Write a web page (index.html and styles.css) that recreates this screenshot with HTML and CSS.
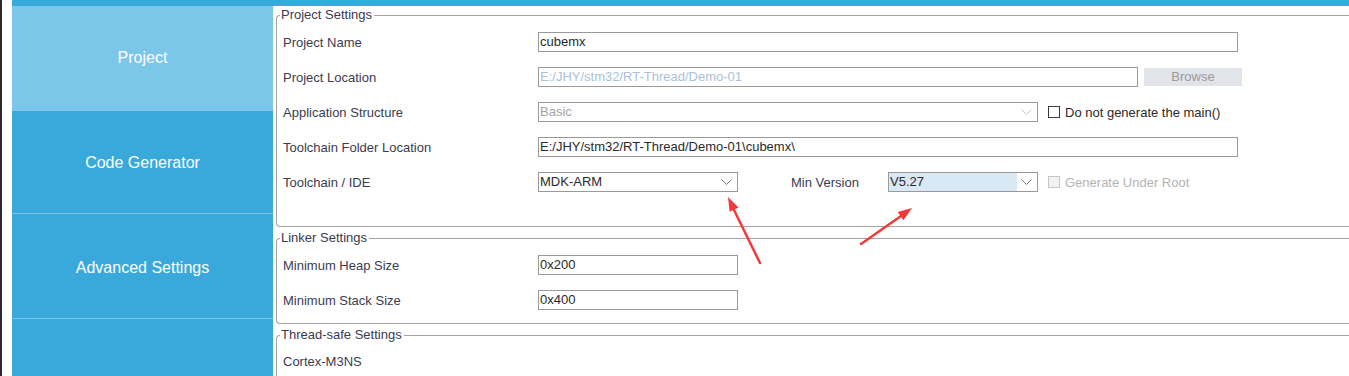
FILE: index.html
```html
<!DOCTYPE html>
<html lang="en">
<head>
    <meta charset="UTF-8">
    <title>Project Manager</title>
    <link rel="stylesheet" href="styles.css">
</head>
<body>
    <div class="edge"></div>
    <div class="app">
        <div class="topbar"></div>
        <div class="content">
            <div class="sidebar">
                <div class="tab active">Project</div>
                <div class="tab second">Code Generator</div>
                <div class="tab third">Advanced Settings</div>
                <div class="tab last"></div>
            </div>

            <div class="main">
                <fieldset class="group first">
                    <legend>Project Settings</legend>
                    <div class="row">
                        <span class="label">Project Name</span>
                        <div class="field w700">cubemx</div>
                    </div>
                    <div class="row">
                        <span class="label">Project Location</span>
                        <div class="field w600 disabled-path">E:/JHY/stm32/RT-Thread/Demo-01</div>
                        <div class="browse">Browse</div>
                    </div>
                    <div class="row">
                        <span class="label">Application Structure</span>
                        <div class="combo w500 disabled">
                            <span class="value">Basic</span>
                            <span class="arrow"><svg width="11" height="7" viewBox="0 0 11 7"><polyline points="0.5,0.5 5.5,5.5 10.5,0.5" fill="none" stroke="#c4c4c4" stroke-width="1"/></svg></span>
                        </div>
                        <span class="check"></span>
                        <span class="check-label">Do not generate the main()</span>
                    </div>
                    <div class="row">
                        <span class="label">Toolchain Folder Location</span>
                        <div class="field w700">E:/JHY/stm32/RT-Thread/Demo-01\cubemx\</div>
                    </div>
                    <div class="row">
                        <span class="label">Toolchain / IDE</span>
                        <div class="combo w200">
                            <span class="value">MDK-ARM</span>
                            <span class="arrow"><svg width="11" height="7" viewBox="0 0 11 7"><polyline points="0.5,0.5 5.5,5.5 10.5,0.5" fill="none" stroke="#7a7a7a" stroke-width="1"/></svg></span>
                        </div>
                        <span class="label-inline">Min Version</span>
                        <div class="combo w150 focused">
                            <span class="value">V5.27</span>
                            <span class="arrow"><svg width="11" height="7" viewBox="0 0 11 7"><polyline points="0.5,0.5 5.5,5.5 10.5,0.5" fill="none" stroke="#7a7a7a" stroke-width="1"/></svg></span>
                        </div>
                        <span class="check off"></span>
                        <span class="check-label off">Generate Under Root</span>
                    </div>
                </fieldset>

                <fieldset class="group second">
                    <legend>Linker Settings</legend>
                    <div class="row">
                        <span class="label">Minimum Heap Size</span>
                        <div class="field w200">0x200</div>
                    </div>
                    <div class="row">
                        <span class="label">Minimum Stack Size</span>
                        <div class="field w200">0x400</div>
                    </div>
                </fieldset>

                <fieldset class="group third">
                    <legend>Thread-safe Settings</legend>
                    <div class="row">
                        <span class="label">Cortex-M3NS</span>
                    </div>
                </fieldset>
            </div>
        </div>
    </div>

    <!-- red annotation arrows drawn over the form -->
    <svg class="marks" width="1349" height="376" viewBox="0 0 1349 376">
        <line x1="760" y1="263" x2="734" y2="210" stroke="#f23a3a" stroke-width="2.5" stroke-linecap="round"/>
        <polygon points="728,197 738.6,207.4 729.6,211.8" fill="#f23a3a"/>
        <line x1="861" y1="244" x2="901" y2="216" stroke="#f23a3a" stroke-width="2.5" stroke-linecap="round"/>
        <polygon points="912,208 903.4,220.2 897.7,212" fill="#f23a3a"/>
    </svg>
</body>
</html>
```

FILE: styles.css
```css
body {
    margin: 0;
    height: 376px;
    overflow: hidden;
    display: flex;
    background: #ffffff;
    font-family: "Liberation Sans", Arial, sans-serif;
    font-size: 13px;
    color: #3b3b4f;
}

.edge {
    width: 2px;
    background: #2b2b30;
    margin-right: 10px;
    flex-shrink: 0;
}

.app {
    flex: 1;
    display: flex;
    flex-direction: column;
    min-width: 0;
}

.topbar {
    height: 6px;
    background: #39a9db;
    flex-shrink: 0;
}

.content {
    flex: 1;
    display: flex;
    min-height: 0;
}

/* left navigation */
.sidebar {
    width: 261px;
    flex-shrink: 0;
    background: #39a9db;
    display: flex;
    flex-direction: column;
    overflow: hidden;
}

.tab {
    height: 105px;
    flex-shrink: 0;
    box-sizing: border-box;
    border-bottom: 1px solid #78c4e8;
    display: flex;
    align-items: center;
    justify-content: center;
    color: #ffffff;
    font-size: 16px;
}

.tab.active {
    background: #7cc6e9;
    border-bottom-color: #7cc6e9;
}

.tab.second {
    height: 103px;
    padding-top: 2px;
}

.tab.third {
    height: 105px;
    padding-top: 4px;
}

/* right panel */
.main {
    flex: 1;
    padding-left: 3px;
    overflow: hidden;
    min-width: 0;
}

/* the groups run on past the right edge of the window */
.group {
    box-sizing: border-box;
    border: 1px solid #a3a3a3;
    border-right: 0;
    border-radius: 4px 0 0 4px;
    margin: 0;
    padding: 9px 0 0 6px;
    min-width: 0;
}

.group legend {
    margin-left: -3px;
    padding: 0 2px 0 1px;
    line-height: 16px;
    color: #3b3b4f;
}

.group.first {
    margin-top: 1px;
    padding-bottom: 19px;
}

.group.second {
    margin-top: 3px;
    padding-top: 9px;
    padding-bottom: 0;
}

.group.third {
    margin-top: 3px;
    padding-top: 8px;
    height: 60px;
}

.row {
    display: flex;
    align-items: center;
    height: 20px;
    margin-bottom: 15px;
}

.group.second .row:last-child {
    margin-bottom: 13px;
}

.label {
    width: 255px;
    flex-shrink: 0;
}

.field,
.combo {
    height: 20px;
    box-sizing: border-box;
    border: 1px solid #9a9a9a;
    background: #ffffff;
    color: #2a2a2a;
    line-height: 18px;
    padding-left: 1px;
    flex-shrink: 0;
    white-space: nowrap;
    overflow: hidden;
}

.w700 { width: 700px; }
.w600 { width: 600px; }
.w500 { width: 500px; }
.w200 { width: 200px; }
.w150 { width: 150px; }

.disabled-path {
    color: #a9c1d9;
}

.browse {
    margin-left: 6px;
    width: 98px;
    height: 18px;
    background: #e1e4e8;
    color: #9a9a9a;
    text-align: center;
    line-height: 18px;
}

.combo {
    display: flex;
    padding-left: 0;
}

.combo .value {
    flex: 1;
    padding-left: 1px;
}

.combo .arrow {
    width: 18px;
    display: flex;
    align-items: center;
    justify-content: center;
    padding-right: 2px;
}

.combo.disabled .value {
    color: #a3a3a3;
}

.combo.focused .value {
    background: #d9e8f5;
}

.label-inline {
    margin-left: 53px;
    width: 97px;
}

.check {
    width: 12px;
    height: 12px;
    box-sizing: border-box;
    border: 1px solid #3a3a3a;
    background: #ffffff;
    margin-left: 10px;
    flex-shrink: 0;
}

.check.off {
    border-color: #c6c6c6;
    background: #f2f2f2;
}

.check-label {
    margin-left: 5px;
    color: #2a2a2a;
}

.check-label.off {
    color: #b3b3b3;
}

.marks {
    position: absolute;
    left: 0;
    top: 0;
    pointer-events: none;
}
```
